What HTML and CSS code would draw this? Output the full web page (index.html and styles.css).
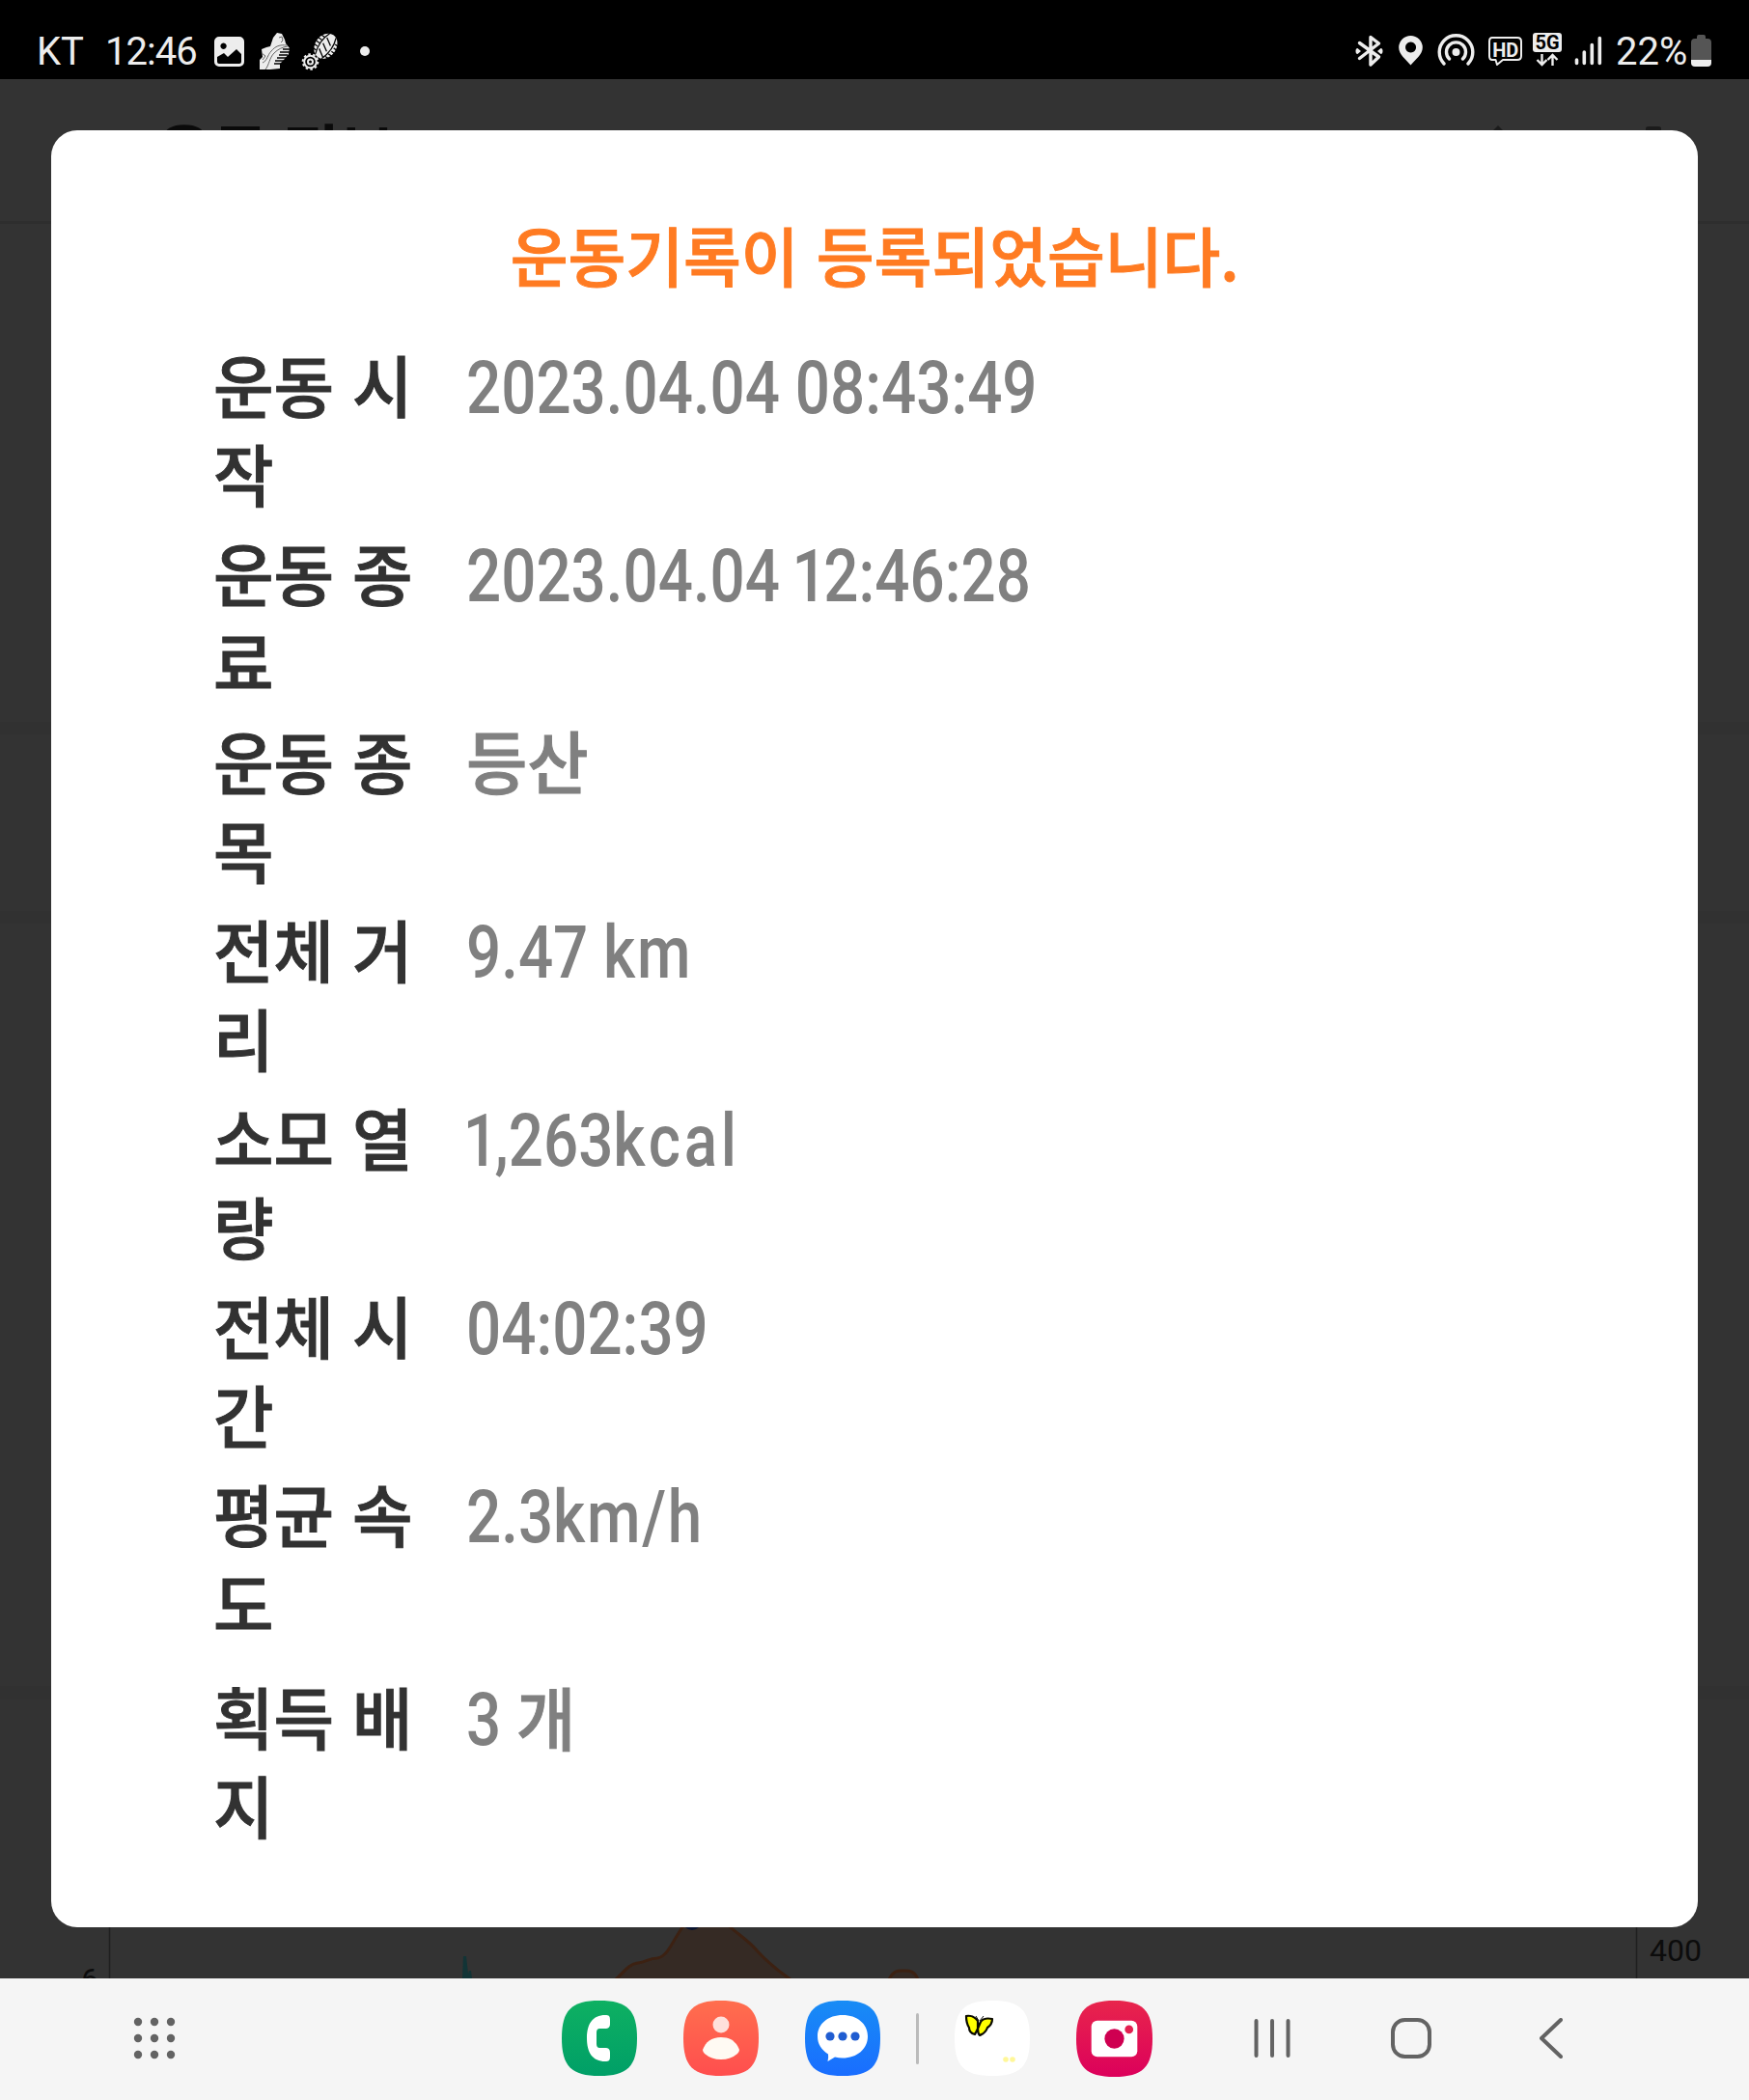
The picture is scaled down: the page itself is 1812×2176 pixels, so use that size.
FILE: index.html
```html
<!DOCTYPE html>
<html lang="ko">
<head>
	<meta charset="UTF-8">
	<title>운동기록</title>
	<link rel="stylesheet" href="styles.css">
</head>
<body>

<div class="screen">

	<div class="status-bar">
		<span class="carrier">KT</span>
		<span class="clock">12:46</span>
		<svg class="status-left" width="170" height="50" viewBox="215 25 170 50">
			<path fill="#ededed" fill-rule="evenodd" d="M227 38h21a5 5 0 0 1 5 5v21a5 5 0 0 1-5 5h-21a5 5 0 0 1-5-5V43a5 5 0 0 1 5-5zM225 59v5q0 2 2 2h21q2 0 2-2v-8l-5-5-9 8-4-4zM231.500 44.500a3.200 3.200 0 1 0 .1 0z"/>
			<path fill="#ededed" d="M269 72v-10l3-3-1-8 5-2 4-1 3-9 4-5 5 1 3 6 1 4 4 5-1 6-5 6-4 4v5l-10 1z"/>
			<path stroke="#000" stroke-width="1.300" fill="none" d="M284 66h10M285 63h9M287 60h10M289 57h9M290 54h10M293 51h7"/>
			<path stroke="#666" stroke-width="1" fill="none" d="M275 72c4-5 4-12 9-17 4-4 8-6 14-7M272 65c5-2 5-8 9-12 4-5 9-7 16-6M289 39l3-1 1 4-2 2M271 55l4 3-3 4"/>
			<g transform="rotate(35 336 48)">
				<ellipse cx="337" cy="47" rx="11" ry="14" fill="#ededed"/>
				<path stroke="#000" stroke-width="1.300" fill="none" d="M333 34q-5 12 0 26M341 34q5 12 0 26M326 40h5M326 44h4M326 48h4M326 52h4M327 56h4M344 40h5M345 44h4M345 48h4M344 52h5M343 56h5M333 39l8 5M333 46l8 5M333 53l8 5"/>
			</g>
			<circle cx="321.500" cy="64" r="6.300" fill="none" stroke="#ededed" stroke-width="2"/>
			<circle cx="321.500" cy="64" r="7.800" fill="none" stroke="#ededed" stroke-width="2" stroke-dasharray="2.500 2.400"/>
			<circle cx="321.500" cy="64" r="2.500" fill="none" stroke="#ededed" stroke-width="2"/>
			<circle cx="378" cy="53" r="5" fill="#ededed"/>
		</svg>
		<svg class="status-right" width="266" height="50" viewBox="1400 25 266 50">
			<g fill="none" stroke="#ededed" stroke-width="3.400" stroke-linejoin="round" stroke-linecap="round">
				<path d="M1407.500 44.500l20 14.500-8.500 8V38.500l8.500 6.500-20 15.500"/>
				<path d="M1495 66a17.300 17.300 0 1 1 25 0M1500.500 61a10 10 0 1 1 14 0"/>
			</g>
			<path fill="#ededed" d="M1403.500 53q0-3 2-3l3.500 3-3.500 3q-2 0-2-3zM1431.500 53q0-3-2-3l-3.500 3 3.500 3q2 0 2-3z"/>
			<path fill="#ededed" fill-rule="evenodd" d="M1460.500 37a12.300 12.300 0 0 1 12.300 12.300c0 7-7 12-12.300 18.200-5.300-6.200-12.300-11.200-12.300-18.200a12.300 12.300 0 0 1 12.300-12.300zm0 6.500a5.500 5.500 0 1 0 .1 0z"/>
			<circle cx="1507.500" cy="54" r="4" fill="#ededed"/>
			<path fill="none" stroke="#ededed" stroke-width="2" stroke-linejoin="round" d="M1545 39h26q4 0 4 4v15q0 4-4 4h-15l-6 5-1.500-5h-3.500q-3 0-3-4V43q0-4 3-4z"/>
			<text class="hd" x="1558.700" y="58.500" text-anchor="middle">HD</text>
			<rect x="1587" y="34" width="30" height="20" rx="3" fill="#ededed"/>
			<text class="fiveg" x="1602" y="51" text-anchor="middle">5G</text>
			<path fill="none" stroke="#ededed" stroke-width="2.400" d="M1596.500 56v11m-5-5l5 5 5-5M1607.500 68V57m-5 5l5-5 5 5"/>
			<path stroke="#ededed" stroke-width="3.600" stroke-linecap="round" d="M1632.500 62v3.500M1640.300 54v11.500M1648.300 46.500v19M1656.300 39.500v26"/>
		</svg>
		<span class="percent">22%</span>
		<svg class="battery" width="21" height="33" viewBox="0 0 21 33">
			<path fill="#555" d="M6 4V2q0-2 2-2h5q2 0 2 2v2h2q4 0 4 4v18H0V8q0-4 4-4z"/>
			<path fill="#ededed" d="M0 26h21v3q0 4-4 4H4q-4 0-4-4z"/>
		</svg>
	</div>

	<!-- page under the dialog, dimmed -->
	<div class="page">
		<svg class="page-content" width="1812" height="1968" viewBox="0 82 1812 1968">
			<path stroke="#2e2e2e" stroke-width="3" d="M0 230.500h1812"/>
			<path stroke="#313131" stroke-width="13" d="M0 754.500h1812M0 950.500h1812M0 1754h1812"/>
			<text class="page-title" x="162" y="181">운동 정보</text>
			<path fill="#1b1b1b" d="M1546 136l6-6 6 6zM1705 136v-3q0-2 3-2h10q3 0 3 2v3z"/>
			<path stroke="#1f1f1f" stroke-width="1.500" d="M113.500 1990v60M1695.500 1990v60"/>
			<text class="axis" x="84" y="2062">6</text>
			<text class="axis" x="1709" y="2031.500">400</text>
			<path fill="#123436" d="M479 2050l1-23h3l2 18 1-3h2l1 8z"/>
			<path fill="#352a24" stroke="#3c2112" stroke-width="3" d="M638 2051c8-7 13-16 23-17 9-1 11-5 20-5 14-2 20-31 33-39h35c12 12 26 20 35 31 12 13 23 22 35 30M921 2051c5-10 10-9 15-9s11-1 15 9"/>
			<circle cx="717" cy="1990" r="10" fill="#0b142f"/>
		</svg>

		<div class="dialog">
			<h2><span>운동기록이 등록되었습니다.</span></h2>
			<dl>
				<div class="row"><dt>운동 시작</dt><dd>2023.04.04 08:43:49</dd></div>
				<div class="row"><dt>운동 종료</dt><dd>2023.04.04 <span class="one">1</span>2:46:28</dd></div>
				<div class="row"><dt>운동 종목</dt><dd class="kor">등산</dd></div>
				<div class="row"><dt>전체 거리</dt><dd>9.47 <span class="km">km</span></dd></div>
				<div class="row"><dt>소모 열량</dt><dd><span class="one">1</span>,263<span class="kcal">kcal</span></dd></div>
				<div class="row"><dt>전체 시간</dt><dd>04:02:39</dd></div>
				<div class="row"><dt>평균 속도</dt><dd>2.3<span class="km">km/h</span></dd></div>
				<div class="row badge"><dt>획득 배지</dt><dd>3 <span class="unit">개</span></dd></div>
			</dl>
		</div>
	</div>

	<div class="nav-bar">
		<svg class="apps" width="44" height="44" viewBox="0 0 44 44" fill="#636363">
			<circle cx="5" cy="5" r="4.200"/><circle cx="22" cy="5" r="4.200"/><circle cx="39" cy="5" r="4.200"/>
			<circle cx="5" cy="22" r="4.200"/><circle cx="22" cy="22" r="4.200"/><circle cx="39" cy="22" r="4.200"/>
			<circle cx="5" cy="39" r="4.200"/><circle cx="22" cy="39" r="4.200"/><circle cx="39" cy="39" r="4.200"/>
		</svg>

		<div class="dock">
			<svg width="78" height="78" viewBox="0 0 78 78">
				<defs>
					<linearGradient id="green" x2="0" y2="1"><stop stop-color="#0eb062"/><stop offset="1" stop-color="#009f67"/></linearGradient>
					<linearGradient id="coral" x2="0" y2="1"><stop stop-color="#ff6e4e"/><stop offset="1" stop-color="#ff4e4e"/></linearGradient>
					<linearGradient id="blue" x2="0" y2="1"><stop stop-color="#188cf5"/><stop offset="1" stop-color="#196dff"/></linearGradient>
					<linearGradient id="pink" x2="0" y2="1"><stop stop-color="#e8254c"/><stop offset="1" stop-color="#dc005b"/></linearGradient>
					<path id="tile" d="M39 0C68 0 78 10 78 39S68 78 39 78 0 68 0 39 10 0 39 0z"/>
				</defs>
				<use href="#tile" fill="url(#green)"/>
				<path fill="#fff" d="M45 15c4 0 5 1 5 5v4c0 4-2 5-5 5h-5c-3 0-4 1-4 5v10c0 4 1 5 4 5h5c3 0 5 1 5 5v4c0 4-1 5-5 5-13 0-19-9-19-24s6-24 19-24z"/>
			</svg>
			<svg width="78" height="78" viewBox="0 0 78 78">
				<use href="#tile" fill="url(#coral)"/>
				<circle cx="39" cy="25" r="8.500" fill="#ffe0db"/>
				<path fill="#fffaf3" d="M39 38c10 0 16 5 19 13q0 2-2 4-7 6-17 6t-17-6q-2-2-2-4c3-8 9-13 19-13z"/>
			</svg>
			<svg width="78" height="78" viewBox="0 0 78 78">
				<use href="#tile" fill="url(#blue)"/>
				<path fill="#fff" d="M39 15c15 0 26 9 26 22S54 59.500 39 59.500q-4 0-8-1l-7.500 4.500q1-4 .5-7.500C17 51 13 45 13 37c0-13 11-22 26-22z"/>
				<g fill="#205dd1"><circle cx="26" cy="37" r="4.600"/><circle cx="39" cy="37" r="4.600"/><circle cx="52" cy="37" r="4.600"/></g>
			</svg>
			<i class="divider"></i>
			<svg width="78" height="78" viewBox="0 0 78 78">
				<use href="#tile" fill="#fff"/>
				<path fill="#ff0" stroke="#0a0a00" stroke-width="2.200" stroke-linejoin="round" d="M24 21c-3-4-8-6-12-5 0 5 1 9 3 12 0 4 2 6 6 7l3-6q0 5 2 7c5-2 7-5 8-8 3-2 5-6 5-9-5-1-10 0-12 3l-3 7z"/>
				<path stroke="#111" stroke-width="1" fill="none" d="M25 21l-3-5M26 21l4-5"/>
				<circle cx="53" cy="61" r="2.800" fill="#fff799"/><circle cx="60" cy="61" r="2.800" fill="#fff799"/>
			</svg>
			<svg width="79" height="79" viewBox="0 0 78 78">
				<use href="#tile" fill="url(#pink)"/>
				<rect x="15.500" y="20.500" width="47" height="37" rx="6" fill="#fff"/>
				<circle cx="39" cy="39" r="10" fill="#cf0051"/>
				<circle cx="54" cy="29.500" r="4.300" fill="#e32050"/>
			</svg>
		</div>

		<div class="keys">
			<svg width="38" height="42" viewBox="0 0 38 42"><path d="M2.500 3v36M19 3v36M35.500 3v36"/></svg>
			<svg class="home" width="42" height="42" viewBox="0 0 42 42"><rect x="2" y="2" width="38" height="38" rx="12.500"/></svg>
			<svg width="24" height="42" viewBox="0 0 24 42"><path d="M22 2L2 21l20 19"/></svg>
		</div>
	</div>

</div>

</body>
</html>
```

FILE: styles.css
```css
* {
	margin: 0;
	padding: 0;
	box-sizing: border-box;
}
body {
	font-family: Roboto, "Noto Sans CJK KR", sans-serif;
	background: #000;
}
.screen {
	width: 1812px;
	height: 2176px;
	display: flex;
	flex-direction: column;
	overflow: hidden;
}
.status-bar {
	height: 82px;
	padding: 24px 39px 0 38px;
	display: flex;
	background: #000;
	color: #ededed;
	font-size: 40px;
	line-height: 59px;
}
.carrier {
	width: 71px;
}
.clock {
	width: 106px;
	letter-spacing: -1px;
}
.status-left,
.status-right {
	margin-top: 1px;
}
.status-right {
	margin-left: auto;
}
.percent {
	width: 77px;
	margin-left: 7px;
	white-space: nowrap;
}
.battery {
	margin: 12px 0 0 1px;
}
.hd,
.fiveg {
	font-weight: bold;
	font-size: 20px;
	fill: #ededed;
}
.fiveg {
	fill: #000;
}
.page {
	height: 1968px;
	padding: 53px;
	background: #333;
	position: relative;
}
.page-content {
	position: absolute;
	top: 0;
	left: 0;
}
.page-title {
	font-size: 63px;
	font-weight: bold;
	fill: #0a0a0a;
}
.axis {
	font-size: 32px;
	fill: #0c0c0c;
}
.dialog {
	position: relative;
	height: 1862px;
	padding: 75px 168px 0;
	border-radius: 27px;
	background: #fff;
}
h2 {
	height: 106px;
	text-align: center;
	font-family: "Noto Sans CJK KR", sans-serif;
	font-size: 67px;
	line-height: 106px;
	font-weight: 500;
	color: #ff7b22;
	white-space: nowrap;
	-webkit-text-stroke: 1px #ff7b22;
}
h2 span {
	display: inline-block;
	transform: scaleX(.97);
}
dl {
	padding-top: 36px;
}
.row {
	display: flex;
	height: 195px;
	line-height: 92px;
}
.row.badge {
	margin-top: 15px;
}
dt {
	width: 262px;
	padding-right: 22px;
	font-family: "Noto Sans CJK KR", sans-serif;
	font-size: 70px;
	font-weight: 500;
	color: #323232;
	-webkit-text-stroke: 1px #323232;
	transform: scaleX(.97);
	transform-origin: left;
}
dd {
	height: 92px;
	padding-top: 4px;
	font-size: 76px;
	font-weight: 500;
	color: #808080;
	white-space: pre;
	transform: scaleX(.838);
	transform-origin: left;
}
.one {
	margin: 0 -4px;
}
.km {
	letter-spacing: 2px;
}
.kcal {
	letter-spacing: 4.5px;
}
dd.kor {
	padding-top: 5px;
	font-size: 71px;
	-webkit-text-stroke: 1px #808080;
	transform: scaleX(.97);
}
.unit {
	display: inline-block;
	font-size: 71px;
	line-height: 80px;
	-webkit-text-stroke: 1px #808080;
	transform: scaleX(1.12);
	transform-origin: left;
}
.nav-bar {
	height: 126px;
	display: flex;
	align-items: center;
	padding: 0 193px 2px 138px;
	background: #f5f5f5;
}
.dock {
	display: flex;
	align-items: center;
	gap: 48px;
	margin-left: 400px;
}
.divider {
	width: 3px;
	height: 53px;
	margin: 0 -11px 0 -11px;
	border-radius: 2px;
	background: #bbb;
}
.keys {
	display: flex;
	gap: 104px;
	margin-left: auto;
}
.keys svg {
	fill: none;
	stroke: #636363;
	stroke-width: 4;
	stroke-linecap: round;
	stroke-linejoin: round;
}
.keys .home {
	margin-right: 8px;
}
```
